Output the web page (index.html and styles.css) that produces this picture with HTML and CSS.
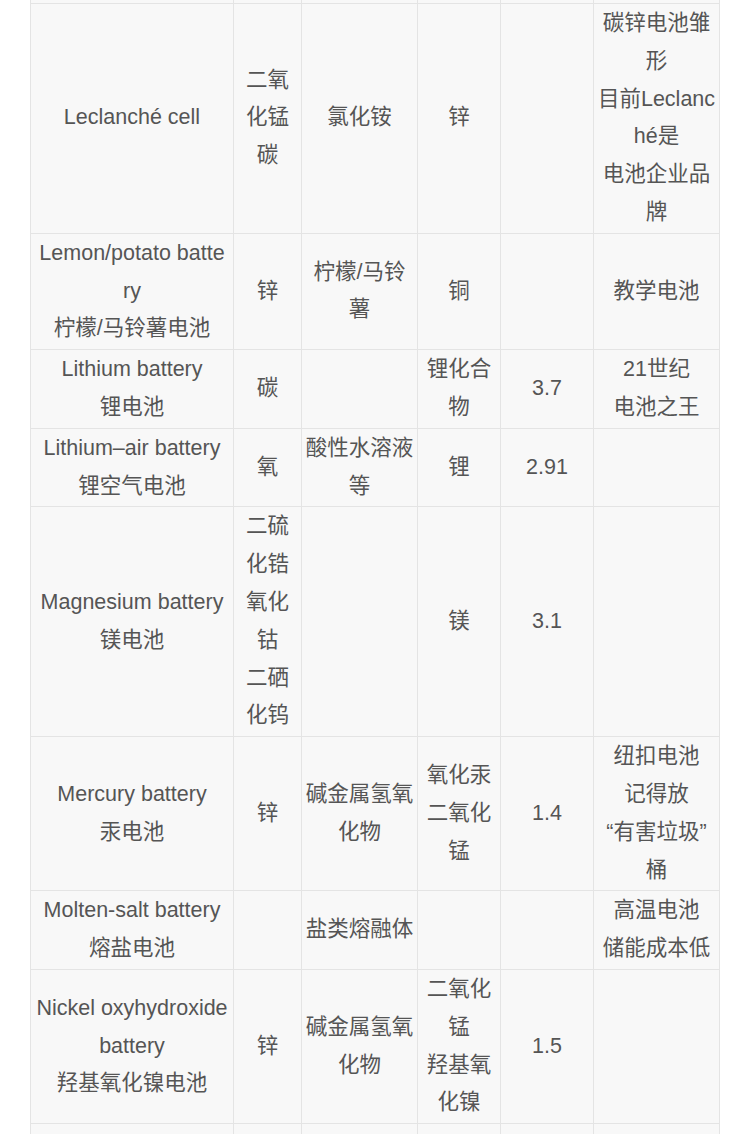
FILE: index.html
```html
<!DOCTYPE html>
<html lang="zh-CN">
<head>
<meta charset="utf-8">
<title>电池种类</title>
<link rel="stylesheet" href="styles.css">
</head>
<body>
<table class="battery-table">
  <colgroup>
    <col class="c-name">
    <col class="c-pos">
    <col class="c-ele">
    <col class="c-neg">
    <col class="c-volt">
    <col class="c-note">
  </colgroup>
  <tbody>
    <tr class="row-edge-top"><td></td><td></td><td></td><td></td><td></td><td></td></tr>
    <tr>
      <td>Leclanché cell</td>
      <td>二氧<br>化锰<br>碳</td>
      <td>氯化铵</td>
      <td>锌</td>
      <td></td>
      <td>碳锌电池雏<br>形<br>目前Leclanc<br>hé是<br>电池企业品<br>牌</td>
    </tr>
    <tr>
      <td>Lemon/potato batte<br>ry<br>柠檬/马铃薯电池</td>
      <td>锌</td>
      <td>柠檬/马铃<br>薯</td>
      <td>铜</td>
      <td></td>
      <td>教学电池</td>
    </tr>
    <tr>
      <td>Lithium battery<br>锂电池</td>
      <td>碳</td>
      <td></td>
      <td>锂化合<br>物</td>
      <td>3.7</td>
      <td>21世纪<br>电池之王</td>
    </tr>
    <tr>
      <td>Lithium–air battery<br>锂空气电池</td>
      <td>氧</td>
      <td>酸性水溶液<br>等</td>
      <td>锂</td>
      <td>2.91</td>
      <td></td>
    </tr>
    <tr>
      <td>Magnesium battery<br>镁电池</td>
      <td>二硫<br>化锆<br>氧化<br>钴<br>二硒<br>化钨</td>
      <td></td>
      <td>镁</td>
      <td>3.1</td>
      <td></td>
    </tr>
    <tr>
      <td>Mercury battery<br>汞电池</td>
      <td>锌</td>
      <td>碱金属氢氧<br>化物</td>
      <td>氧化汞<br>二氧化<br>锰</td>
      <td>1.4</td>
      <td>纽扣电池<br>记得放<br>“有害垃圾”<br>桶</td>
    </tr>
    <tr>
      <td>Molten-salt battery<br>熔盐电池</td>
      <td></td>
      <td>盐类熔融体</td>
      <td></td>
      <td></td>
      <td>高温电池<br>储能成本低</td>
    </tr>
    <tr>
      <td>Nickel oxyhydroxide<br>battery<br>羟基氧化镍电池</td>
      <td>锌</td>
      <td>碱金属氢氧<br>化物</td>
      <td>二氧化<br>锰<br>羟基氧<br>化镍</td>
      <td>1.5</td>
      <td></td>
    </tr>
    <tr class="row-edge-bottom"><td></td><td></td><td></td><td></td><td></td><td></td></tr>
  </tbody>
</table>
</body>
</html>
```

FILE: styles.css
```css
html, body {
  margin: 0;
  padding: 0;
  background: #ffffff;
}

body {
  padding: 0 30px;
  overflow: hidden;
  height: 1134px;
  font-family: "Liberation Sans", "Noto Sans CJK SC", sans-serif;
  color: #555555;
}

.battery-table {
  width: 689px;
  margin-top: -38px;
  border-collapse: collapse;
  table-layout: fixed;
  font-size: 21.5px;
  line-height: 37.8px;
}

.c-name { width: 203px; }
.c-pos { width: 68px; }
.c-ele { width: 116px; }
.c-neg { width: 83px; }
.c-volt { width: 93px; }
.c-note { width: 126px; }

.battery-table td {
  border: 1px solid #e4e4e4;
  background: #f8f8f8;
  padding: 1px 0;
  text-align: center;
  vertical-align: middle;
  white-space: nowrap;
  overflow: hidden;
}

.row-edge-top td {
  height: 38px;
}

.row-edge-bottom td {
  height: 60px;
}
```
